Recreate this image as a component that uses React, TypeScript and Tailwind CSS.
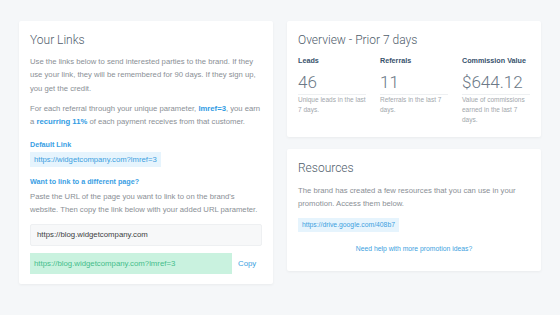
import React from "react";

const body = "font-['Liberation_Sans',Arial,sans-serif]";
const title = "font-['Roboto',sans-serif] font-light text-[12px] leading-[16px] text-[#4f5d6b]";

function Stat({ label, value, desc }: { label: string; value: string; desc: string }) {
  return (
    <div className="flex flex-col">
      <div className="mt-[5.5px] text-[7.2px] font-bold leading-[13.5px] text-[#37526c]">{label}</div>
      <div className="mt-[5px] font-['Roboto',sans-serif] font-light text-[17px] leading-[20px] text-[#6c7987] pb-[2px] border-b border-[#eef0f2]">
        {value}
      </div>
      <div className="text-[6.5px] leading-[10px] text-[#a2a7ac]">{desc}</div>
    </div>
  );
}

export default function App() {
  return (
    <div className={`${body} w-[560px] h-[315px] bg-[#f5f7f9] flex items-start gap-[14px] pt-[21px] px-[19px]`}>
      {/* Left card */}
      <div className="w-[254px] bg-white rounded-[2px] shadow-[0_1px_3px_rgba(0,0,0,0.05)] px-[11px] pt-[11px] pb-[10px] flex flex-col">
        <h2 className={title}>Your Links</h2>
        <p className="mt-[6.5px] text-[7.7px] leading-[13.5px] text-[#8a8f95]">
          Use the links below to send interested parties to the brand. If they use your link, they will be remembered for 90 days. If they sign up, you get the credit.
        </p>
        <p className="mt-[6.5px] text-[7.7px] leading-[13.5px] text-[#8a8f95]">
          For each referral through your unique parameter, <span className="font-bold text-[#2f9be3]">lmref=3</span>, you earn a{" "}
          <span className="font-bold text-[#2f9be3]">recurring 11%</span> of each payment receives from that customer.
        </p>
        <div className="mt-[9px] text-[7.2px] font-bold leading-[13.5px] text-[#3aa0e4]">Default Link</div>
        <div className="mt-[1px] w-fit h-[15px] leading-[15px] px-[4px] bg-[#e6f4fd] text-[7.7px] text-[#3d9fe0]">
          https://widgetcompany.com?lmref=3
        </div>
        <div className="mt-[7.5px] text-[7.2px] font-bold leading-[13.5px] text-[#3aa0e4]">Want to link to a different page?</div>
        <p className="mt-[1.5px] text-[7.7px] leading-[13.5px] text-[#8a8f95]">
          Paste the URL of the page you want to link to on the brand's website. Then copy the link below with your added URL parameter.
        </p>
        <div className="mt-[7.5px] h-[22px] flex items-center px-[6px] bg-[#f7f8f9] border border-[#eef0f2] rounded-[2px] text-[7.8px] text-[#3c3f42]">
          https://blog.widgetcompany.com
        </div>
        <div className="mt-[7px] flex items-center">
          <div className="w-[202px] h-[21px] flex items-center px-[4px] bg-[#c9f2df] text-[7.8px] text-[#45bd8b]">
            https://blog.widgetcompany.com?lmref=3
          </div>
          <span className="ml-[6px] text-[7.8px] text-[#3d9fe0]">Copy</span>
        </div>
      </div>

      {/* Right column */}
      <div className="w-[254px] flex flex-col gap-[12px]">
        <div className="bg-white rounded-[2px] shadow-[0_1px_3px_rgba(0,0,0,0.05)] px-[11px] pt-[11px] pb-[12px]">
          <h2 className={title}>Overview - Prior 7 days</h2>
          <div className="grid grid-cols-3 gap-x-[14px]">
            <Stat label="Leads" value="46" desc="Unique leads in the last 7 days." />
            <Stat label="Referrals" value="11" desc="Referrals in the last 7 days." />
            <Stat label="Commission Value" value="$644.12" desc="Value of commissions earned in the last 7 days." />
          </div>
        </div>

        <div className="bg-white rounded-[2px] shadow-[0_1px_3px_rgba(0,0,0,0.05)] px-[11px] pt-[11px] pb-[15.5px] flex flex-col">
          <h2 className={title}>Resources</h2>
          <p className="mt-[7.5px] text-[7.7px] leading-[13.5px] text-[#8a8f95]">
            The brand has created a few resources that you can use in your promotion. Access them below.
          </p>
          <div className="mt-[7.5px] w-fit h-[14px] leading-[14px] px-[4px] bg-[#e6f4fd] text-[6.8px] text-[#3d9fe0]">
            https://drive.google.com/408b7
          </div>
          <div className="mt-[10px] text-center text-[6.8px] leading-[13.5px] text-[#3d9fe0]">
            Need help with more promotion ideas?
          </div>
        </div>
      </div>
    </div>
  );
}
